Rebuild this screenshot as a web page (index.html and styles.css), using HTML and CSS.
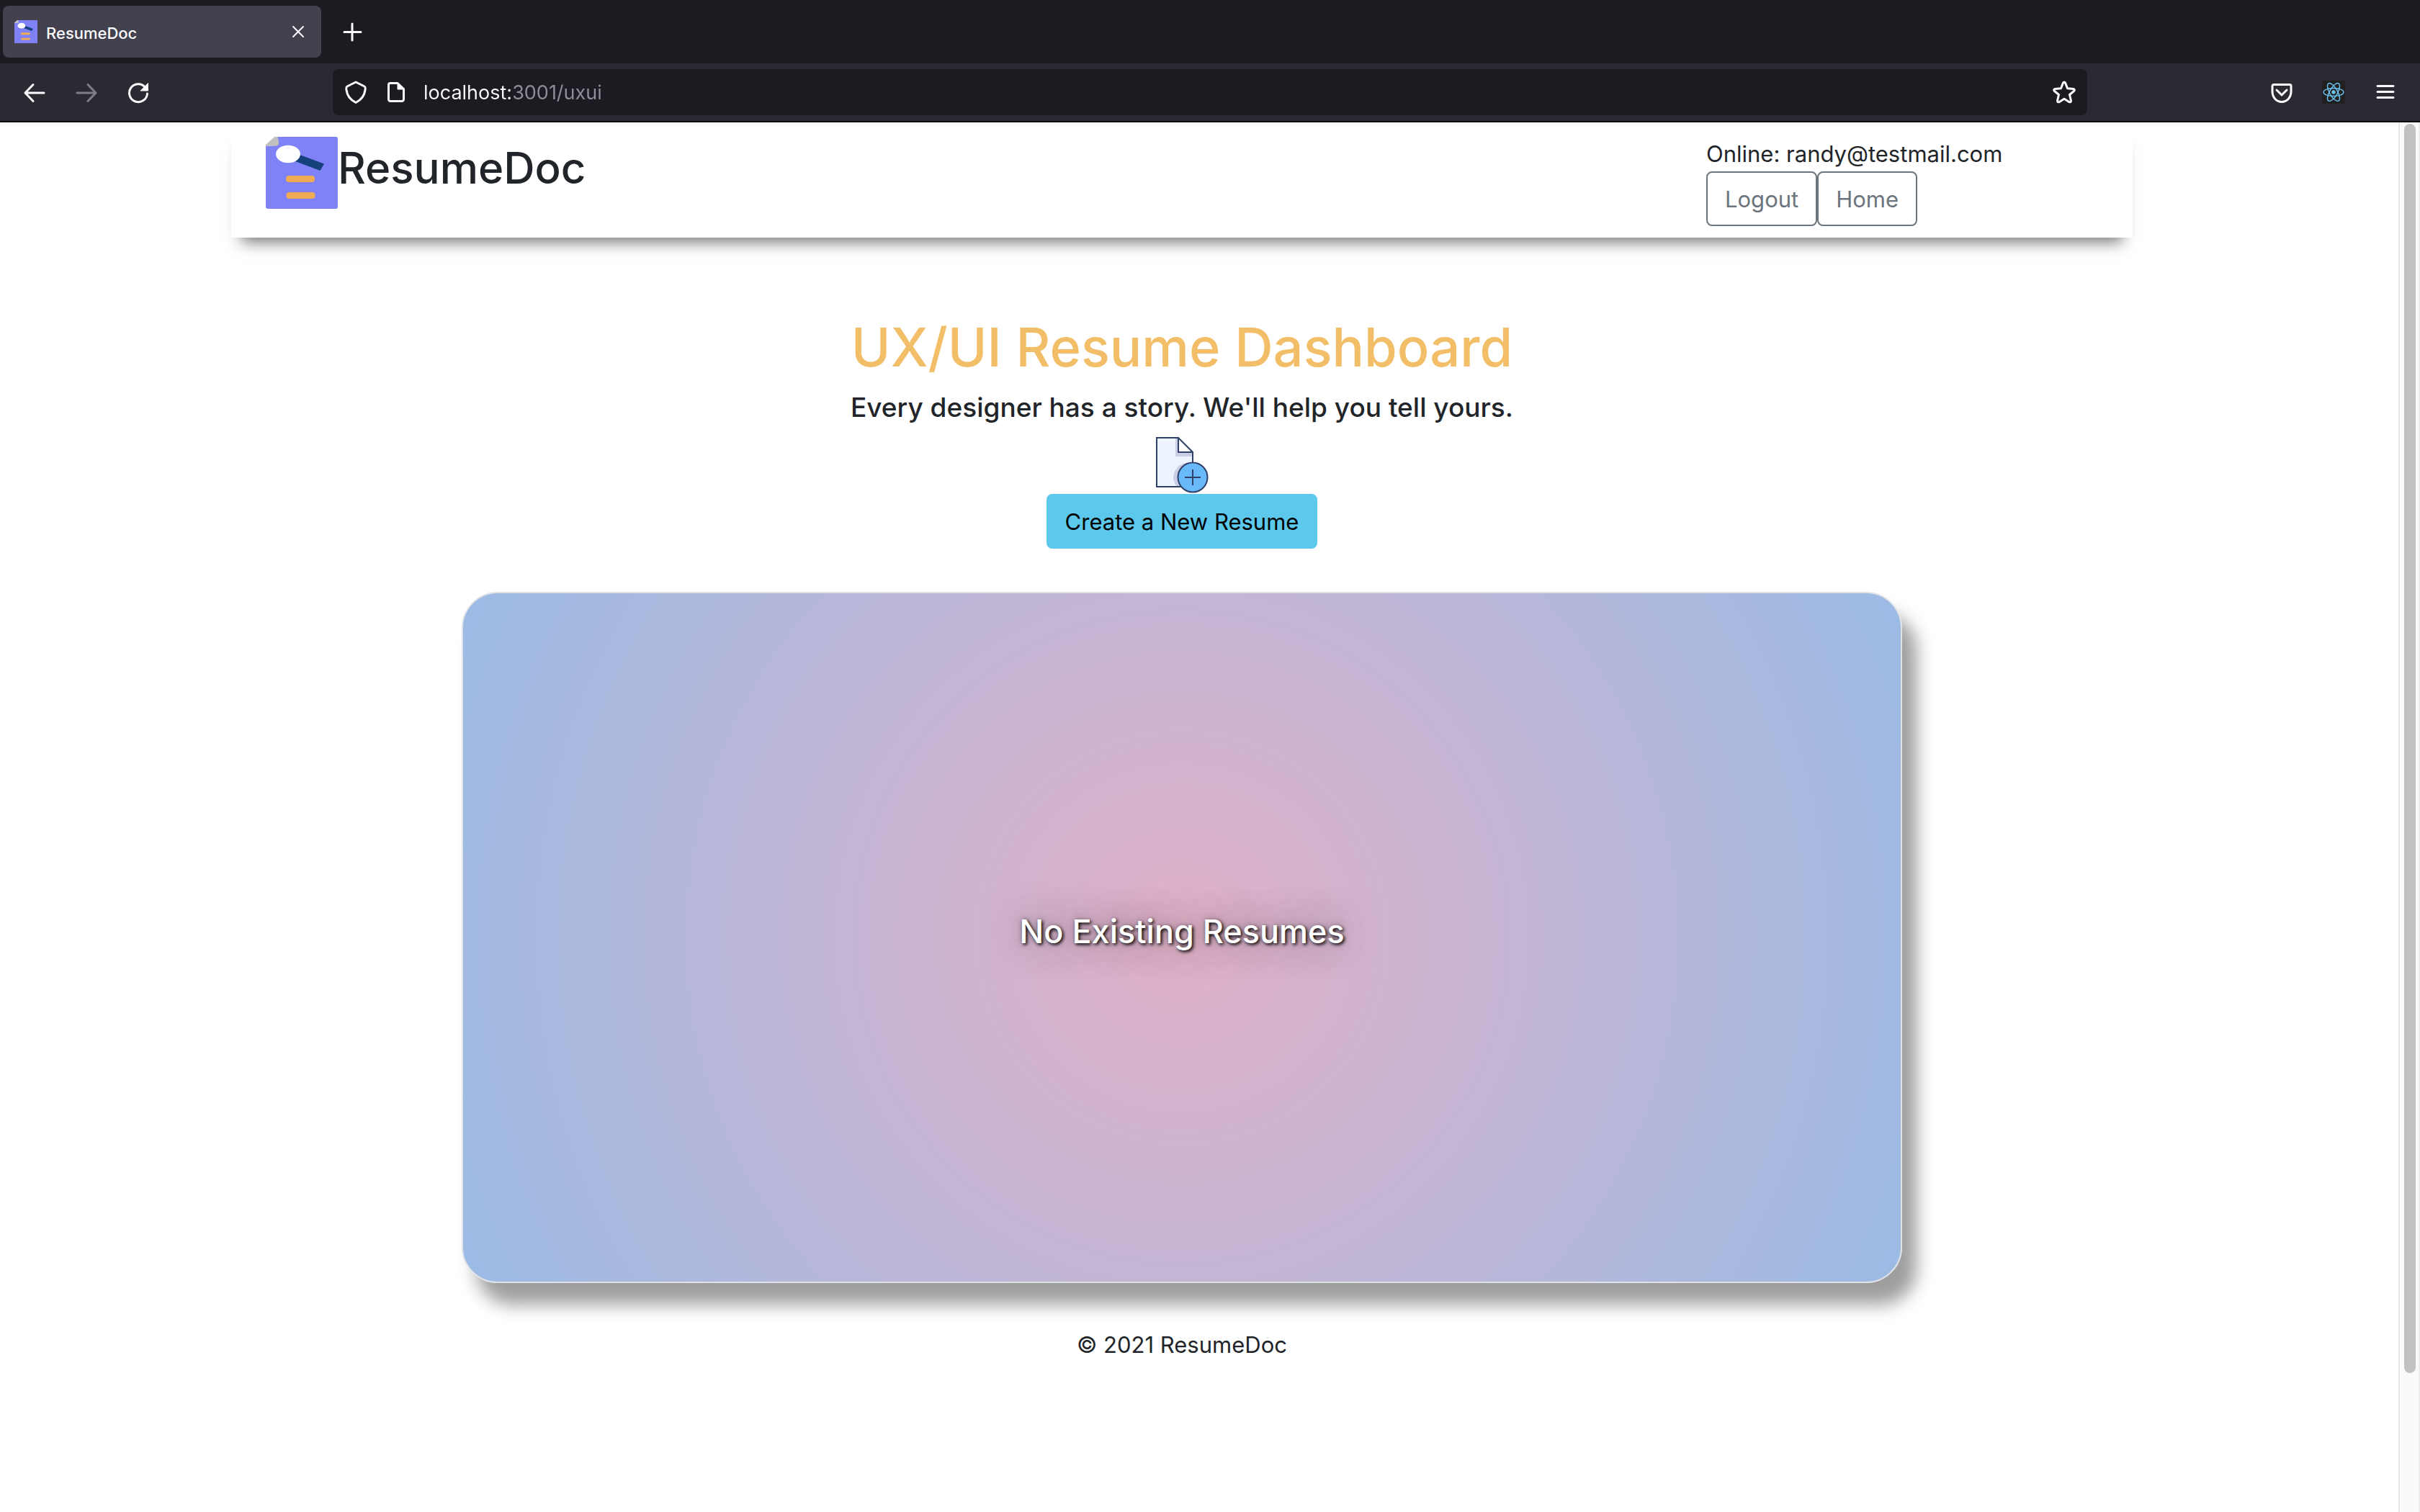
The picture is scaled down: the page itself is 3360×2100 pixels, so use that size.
FILE: index.html
```html
<!DOCTYPE html>
<html lang="en">
<head>
  <meta charset="utf-8">
  <title>ResumeDoc</title>
  <link rel="stylesheet" href="styles.css">
</head>
<body>
  <svg class="sprite" aria-hidden="true">
    <symbol id="doc-logo" viewBox="0 0 100 100">
      <path fill="#7f82f7" d="M16 0H97a3 3 0 0 1 3 3V97a3 3 0 0 1-3 3H3a3 3 0 0 1-3-3V12z"/>
      <path fill="#c0c0c0" d="M0 13V11L12 0H16.500L18 6V9Q18 12 15 12.500Q8 13 0 13z"/>
      <path fill="#15407c" d="M41 34L47 25L81 37.500L75.500 47z"/>
      <ellipse cx="31" cy="24" rx="17" ry="12.200" fill="#fff"/>
      <rect x="28" y="54" width="40" height="9" rx="4" fill="#efac55"/>
      <rect x="28.500" y="77" width="40" height="9" rx="4" fill="#efac55"/>
    </symbol>
  </svg>

  <div class="tabs">
    <div class="tab">
      <svg class="icon"><use href="#doc-logo"/></svg>
      <span class="tab-title">ResumeDoc</span>
      <button class="tool" aria-label="Close tab">
        <svg class="icon" viewBox="0 0 32 32"><path d="M9 9L23 23M23 9L9 23"/></svg>
      </button>
    </div>
    <button class="tool" aria-label="New tab">
      <svg class="icon thick" viewBox="0 0 32 32"><path d="M15 5V28M4 16.500H27"/></svg>
    </button>
  </div>

  <div class="toolbar">
    <div class="nav-tools">
      <button class="tool" aria-label="Back">
        <svg class="icon thick" viewBox="0 0 32 32"><path d="M29 17H3.500M14 5.500L3 17L14 28.500"/></svg>
      </button>
      <button class="tool dim" aria-label="Forward">
        <svg class="icon thick" viewBox="0 0 32 32"><path d="M3 17H28.500M18 5.500L29 17L18 28.500"/></svg>
      </button>
      <button class="tool" aria-label="Reload">
        <svg class="icon thick" viewBox="0 0 32 32"><path d="M28.500 18A12.500 12.500 0 1 1 25.500 9"/><path class="solid" d="M29.500 4V14H19.500z"/></svg>
      </button>
    </div>
    <div class="address">
      <svg class="icon thick" viewBox="0 0 32 32"><path d="M16 2L28 8C29.500 8.700 29.500 10 29 13C28 21 23 27 16 30.500C9 27 4 21 3 13C2.500 10 2.500 8.700 4 8z"/></svg>
      <svg class="icon thick" viewBox="0 0 32 32"><path d="M9 3.500H19L27.500 11.500V26a2.500 2.500 0 0 1-2.500 2.500H9A2.500 2.500 0 0 1 6.500 26V6A2.500 2.500 0 0 1 9 3.500z"/><path class="solid" d="M19 3.500V12H27.500z"/></svg>
      <input class="url" type="text" aria-label="Address" value="localhost:3001/uxui">
      <button class="tool" aria-label="Bookmark this page">
        <svg class="icon thick" viewBox="0 0 32 32"><path d="M14.400 3.200Q16 0.800 17.600 3.200L20.500 10.800L28.600 11.500Q31.500 12.200 29.500 14.500L23.500 19.500L25.400 27.500Q25.700 30.500 23 29.700L16 25.300L9 29.700Q6.300 30.500 6.600 27.500L8.500 19.500L2.500 14.500Q0.500 12.200 3.400 11.500L11.500 10.800z"/></svg>
      </button>
    </div>
    <div class="side-tools">
      <button class="tool" aria-label="Save to Pocket">
        <svg class="icon thick" viewBox="0 0 32 32"><path d="M5 5.500H27A2 2 0 0 1 29 7.500V15C29 23 23.500 29.500 16 29.500S3 23 3 15V7.500A2 2 0 0 1 5 5.500z"/><path d="M9 13L16 20L23 13"/></svg>
      </button>
      <button class="tool" aria-label="React Developer Tools">
        <svg class="icon react" viewBox="0 0 32 32"><rect width="32" height="32" rx="2"/><circle cx="16" cy="16" r="2.700"/><ellipse cx="16" cy="16" rx="14" ry="5.500"/><ellipse cx="16" cy="16" rx="14" ry="5.500" transform="rotate(60 16 16)"/><ellipse cx="16" cy="16" rx="14" ry="5.500" transform="rotate(120 16 16)"/></svg>
      </button>
      <button class="tool" aria-label="Open menu">
        <svg class="icon thick" viewBox="0 0 32 32"><path d="M5 7.500H27M5 15.500H27M5 23.500H27"/></svg>
      </button>
    </div>
  </div>

  <div class="viewport">
    <div class="page">
      <header class="header">
        <div class="brand">
          <svg class="logo"><use href="#doc-logo"/></svg>
          <h2 class="brand-name">ResumeDoc</h2>
        </div>
        <div class="account">
          <div>Online: randy@testmail.com</div>
          <div class="account-actions">
            <button class="btn outline">Logout</button>
            <button class="btn outline">Home</button>
          </div>
        </div>
      </header>

      <main class="main">
        <h1 class="title">UX/UI Resume Dashboard</h1>
        <p class="lead">Every designer has a story. We'll help you tell yours.</p>
        <svg class="new-doc" viewBox="0 0 80 80" aria-hidden="true">
          <path fill="#edf4ff" d="M5 2H35L55 22V70H5z"/>
          <path fill="#c9cde6" d="M31 2V28H55V22H35V2z"/>
          <path fill="#c9cde6" d="M47 37A20 20 0 0 0 33 70H49z"/>
          <path fill="#fff" d="M35 2V22H55z"/>
          <path class="line" d="M5 2H35L55 22V70H5zM35 2V22H55"/>
          <circle class="line" cx="55" cy="57" r="20.500" fill="#69b9fb"/>
          <path class="line" d="M55 46V68M44 57H66"/>
        </svg>
        <button class="btn info">Create a New Resume</button>
        <section class="card">
          <p class="empty">No Existing Resumes</p>
        </section>
      </main>

      <footer class="footer">© 2021 ResumeDoc</footer>
    </div>
    <div class="scrollbar"><div class="thumb"></div></div>
  </div>
</body>
</html>
```
FILE: styles.css
```css
* { box-sizing: border-box; }

body {
  margin: 0;
  min-height: 100vh;
  display: flex;
  flex-direction: column;
  background: #fff;
  color: #212529;
  font: 400 31px/48px Inter, "Liberation Sans", sans-serif;
}

h1, h2, p { margin: 0; font-weight: 500; }
button, input { font: inherit; }
.sprite { display: none; }

/* Browser chrome */
.icon {
  display: block;
  flex: none;
  width: 32px;
  height: 32px;
  fill: none;
  stroke: #fbfbfe;
  stroke-width: 2;
  stroke-linecap: round;
  stroke-linejoin: round;
}
.tab > .icon { stroke: none; }
.thick { stroke-width: 3; }
.solid { fill: #fbfbfe; stroke-width: 1; }
.tool { padding: 0; border: 0; background: none; }
.dim { opacity: .4; }

.tabs {
  display: flex;
  align-items: center;
  gap: 28px;
  height: 88px;
  padding: 8px 4px;
  background: #1c1b22;
}
.tab {
  display: flex;
  align-items: center;
  gap: 12px;
  width: 442px;
  height: 72px;
  padding: 0 16px;
  border-radius: 8px;
  background: #42414d;
  color: #fbfbfe;
}
.tab-title { flex: 1; padding-top: 4px; font-size: 22px; font-weight: 500; }

.toolbar {
  display: flex;
  align-items: center;
  height: 82px;
  padding: 0 32px;
  border-bottom: 2px solid #0c0c0d;
  background: #2b2a33;
}
.nav-tools { display: flex; gap: 40px; width: 430px; }
.address {
  display: flex;
  align-items: center;
  gap: 23px;
  flex: 1;
  height: 64px;
  padding: 0 16px;
  border-radius: 8px;
  background: #1c1b22;
}
.url {
  flex: 1;
  min-width: 0;
  height: 48px;
  padding: 2px 0 0;
  border: 0;
  outline: 0;
  font-size: 27px;
  /* host is bright, port and path are dimmed */
  background: linear-gradient(90deg, #fbfbfe 121px, #8f8f9a 121px);
  -webkit-background-clip: text;
  background-clip: text;
  color: transparent;
}
.side-tools { display: flex; justify-content: flex-end; gap: 40px; width: 430px; }
.react { stroke: #6cc0ea; stroke-width: 1.5; }
.react rect { fill: #202020; stroke: none; }
.react circle { fill: #6cc0ea; stroke: none; }

/* Viewport and scrollbar */
.viewport { display: flex; flex: 1; }
.page { flex: 1; padding-right: 48px; }
.scrollbar {
  width: 30px;
  padding: 2px 4px 0 6px;
  border-left: 2px solid #e8e8e8;
  border-right: 2px solid #ececec;
  background: #fafafa;
}
.thumb { height: 90%; border-radius: 8px; background: #c1c1c1; }

/* Header */
.header {
  display: flex;
  justify-content: space-between;
  max-width: 2640px;
  margin: 0 auto;
  padding: 20px 48px 16px;
  background: #fff;
  box-shadow: 0 20px 20px -14px rgba(0, 0, 0, .55);
}
.brand { display: flex; }
.logo { width: 100px; height: 100px; }
.brand-name { font-size: 60px; line-height: 86px; }
.account { width: 544px; }
.account-actions { display: flex; }

.btn {
  padding: 13px 24px 11px;
  border: 2px solid;
  border-radius: 8px;
  background: none;
}
.outline { border-color: #6c757d; color: #6c757d; }
.info { border-color: #5cc8ec; background: #5cc8ec; color: #000; }

/* Dashboard */
.main {
  display: flex;
  flex-direction: column;
  align-items: center;
  padding: 104px 48px 60px;
}
.title { color: #f2be68; font-size: 74px; line-height: 96px; }
.lead { margin-top: 12px; font-size: 37px; }
.new-doc { width: 80px; height: 80px; margin-top: 16px; }
.line { stroke: #2f4168; stroke-width: 2; }
.line:not(circle) { fill: none; }

.card {
  display: grid;
  place-items: center;
  width: 100%;
  max-width: 2000px;
  min-height: 960px;
  margin-top: 60px;
  padding-bottom: 16px;
  border: 2px solid #dfe2e6;
  border-radius: 50px;
  background: radial-gradient(circle, #e1b0c7 0%, #9bbbe5 100%);
  box-shadow: 20px 30px 24px #9e9e9e;
}
.empty {
  color: #fff;
  font-size: 45px;
  text-shadow: 2px 2px 4px #000, 0 0 50px rgba(70, 70, 70, .5), 0 0 10px rgba(70, 70, 70, .5);
}

.footer { padding-top: 2px; text-align: center; }
```
